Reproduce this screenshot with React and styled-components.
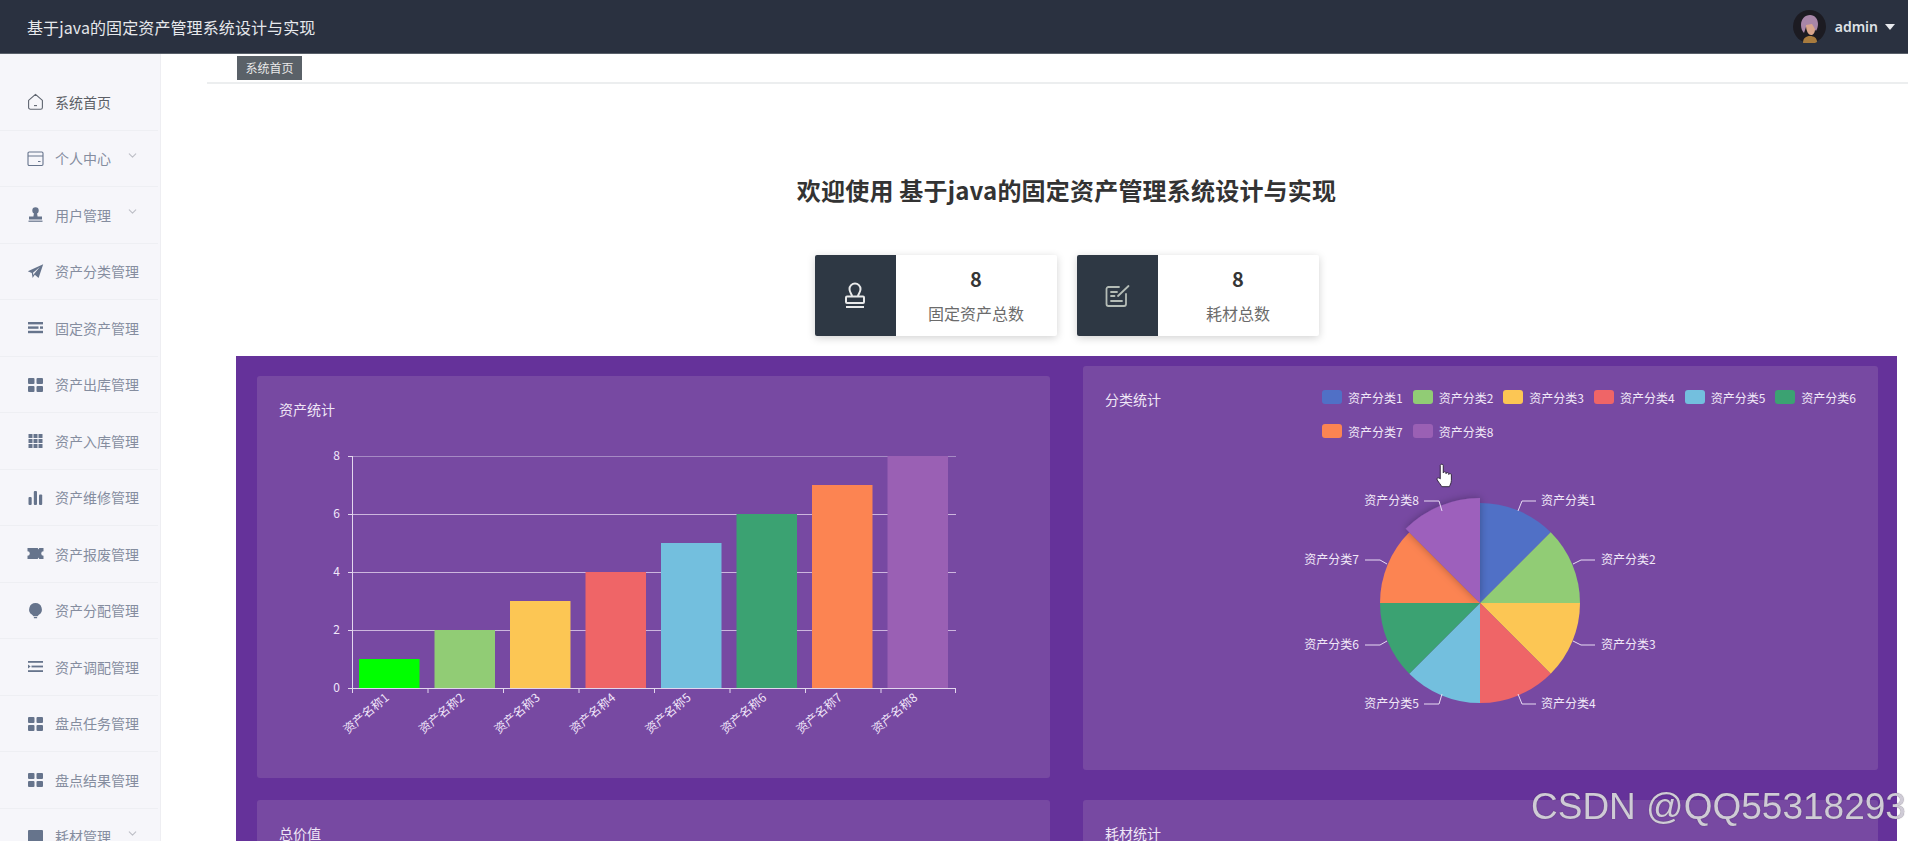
import React from 'react'
import styled, { createGlobalStyle } from 'styled-components'
import { ChevronDown } from 'lucide-react'

const GlobalStyle = createGlobalStyle`
  html, body {
    margin: 0;
    height: 100%;
    overflow: hidden;
    background: #fff;
    font-family: "Noto Sans CJK SC", "Noto Sans", sans-serif;
  }
`

const COLORS = ['#5070c6', '#91cc75', '#fcc654', '#ef6567', '#73bfde', '#3ba272', '#fc8452', '#9a60b4']
const CATEGORIES = COLORS.map((color, i) => ({ name: `资产分类${i + 1}`, color }))
const BARS = [
  { name: '资产名称1', value: 1, color: '#00ff00' },
  { name: '资产名称2', value: 2, color: COLORS[1] },
  { name: '资产名称3', value: 3, color: COLORS[2] },
  { name: '资产名称4', value: 4, color: COLORS[3] },
  { name: '资产名称5', value: 5, color: COLORS[4] },
  { name: '资产名称6', value: 6, color: COLORS[5] },
  { name: '资产名称7', value: 7, color: COLORS[6] },
  { name: '资产名称8', value: 8, color: COLORS[7] },
]

const Page = styled.div`
  height: 100vh;
  display: flex;
  flex-direction: column;
  overflow: hidden;
`

const Header = styled.header`
  flex: 0 0 54px;
  display: flex;
  align-items: center;
  justify-content: space-between;
  padding: 0 13px 0 27px;
  background: #2a3140;
  border-bottom: 1px solid #59606a;
  box-sizing: border-box;
`

const AppTitle = styled.div`
  color: #e6e8ec;
  font-size: 16px;
  letter-spacing: 0.1px;
`

const User = styled.div`
  display: flex;
  align-items: center;
  color: #dfe2e6;
  font-size: 14px;
  font-family: "Noto Sans", sans-serif;
  font-weight: 600;
`

const UserName = styled.span`
  margin: 0 7px 0 9px;
`

const Caret = styled.span`
  width: 0;
  height: 0;
  border-left: 5px solid transparent;
  border-right: 5px solid transparent;
  border-top: 6px solid #e8eaee;
`

const Body = styled.div`
  flex: 1;
  display: flex;
  min-height: 0;
`

const Sidebar = styled.aside`
  flex: 0 0 161px;
  box-sizing: border-box;
  padding-top: 20px;
  background: #f6f6fa;
  border-right: 1px solid #eeeef2;
  overflow: hidden;
`

const MenuRow = styled.div`
  height: 56.5px;
  box-sizing: border-box;
  margin-right: 2px;
  padding-left: 27px;
  display: flex;
  align-items: center;
  border-bottom: 1px solid #eeeff3;
  font-size: 14px;
  color: ${p => (p.$active ? '#5c5f66' : '#858d9f')};

  svg.menu-icon {
    flex: 0 0 17px;
    margin-right: 11px;
    color: ${p => (p.$active ? '#5f6570' : '#66748c')};
  }
`

const Chevron = styled(ChevronDown)`
  margin: 0 0 6px 15px;
  color: #bdbfc7;
`

const Main = styled.main`
  flex: 1;
  min-width: 0;
  overflow: hidden;
`

const BreadBar = styled.div`
  height: 28px;
  margin-left: 46px;
  padding-left: 30px;
  border-bottom: 2px solid #eceeef;
`

const BreadTag = styled.span`
  display: inline-block;
  width: 65px;
  height: 24px;
  line-height: 24px;
  text-align: center;
  background: #5a6168;
  color: #e9e9e9;
  font-size: 12px;
`

const Content = styled.div`
  padding: 0 11px 0 75px;
`

const Welcome = styled.h1`
  margin: 89px 0 48px;
  text-align: center;
  font-size: 24px;
  line-height: 34px;
  font-weight: 700;
  letter-spacing: 0.2px;
  color: #333;
`

const StatRow = styled.div`
  display: flex;
  justify-content: center;
  gap: 20px;
  margin-bottom: 20px;
`

const StatCard = styled.div`
  width: 242px;
  height: 81px;
  display: flex;
  background: #fff;
  border-radius: 2px;
  box-shadow: 0 2px 8px rgba(0, 0, 0, 0.18);
  overflow: hidden;
`

const StatIcon = styled.div`
  flex: 0 0 81px;
  display: flex;
  align-items: center;
  justify-content: center;
  background: #2e3844;
  color: ${p => p.$color};
`

const StatText = styled.div`
  flex: 1;
  text-align: center;
`

const StatValue = styled.div`
  margin-top: 9px;
  font-size: 20px;
  line-height: 30px;
  font-weight: 700;
  color: #353535;
`

const StatLabel = styled.div`
  margin-top: 7px;
  font-size: 16px;
  line-height: 24px;
  color: #6b6b6b;
`

const Panel = styled.section`
  display: grid;
  grid-template-columns: 793px 795px;
  column-gap: 33px;
  row-gap: 22px;
  align-items: start;
  padding: 10px 0 0 21px;
  height: 600px;
  background: #65329a;
`

const Card = styled.div`
  box-sizing: border-box;
  height: ${p => (p.$drop ? '402px' : '404px')};
  margin-top: ${p => (p.$drop ? '10px' : '0')};
  padding: 23px 10px 0 22px;
  background: #7749a2;
  border-radius: 3px;
`

const LowerCard = styled(Card)`
  margin-top: ${p => (p.$lift ? '-1px' : '0')};
`

const CardHead = styled.div`
  display: flex;
  align-items: flex-start;
  justify-content: space-between;
`

const CardTitle = styled.div`
  font-size: 14px;
  line-height: 20px;
  color: #efe6f6;
`

const Legend = styled.div`
  width: 546px;
  margin-top: 1px;
  display: flex;
  flex-wrap: wrap;
  column-gap: 10px;
  row-gap: 20px;
`

const LegendItem = styled.div`
  display: flex;
  align-items: center;
  gap: 6px;
  height: 14px;
  font-size: 12px;
  color: #f1e8f8;
`

const Swatch = styled.i`
  width: 20px;
  height: 14px;
  border-radius: 3px;
  background: ${p => p.$color};
`

const ChartSvg = styled.svg`
  display: block;
  font-family: "Noto Sans CJK SC", sans-serif;
  font-size: 12px;
`

const Watermark = styled.div`
  position: fixed;
  left: 1531px;
  top: 783px;
  font-family: "Liberation Sans", sans-serif;
  font-size: 37px;
  line-height: 48px;
  white-space: nowrap;
  color: #cfcbd6;
  text-shadow: 0 0 1px rgba(50, 40, 60, 0.7);
`

const icon = children => (
  <svg className="menu-icon" width="17" height="17" viewBox="0 0 17 17" fill="currentColor">
    {children}
  </svg>
)

const Grid4 = () =>
  icon(
    <>
      <rect x="1" y="2" width="6.5" height="6" rx="1" />
      <rect x="9.5" y="2" width="6.5" height="6" rx="1" />
      <rect x="1" y="10" width="6.5" height="6" rx="1" />
      <rect x="9.5" y="10" width="6.5" height="6" rx="1" />
    </>
  )

const MENU = [
  {
    name: '系统首页',
    active: true,
    icon: icon(
      <g fill="none" stroke="currentColor" strokeWidth="1.1">
        <path d="M1.6 7.4 8.5 1.3l6.9 6.1v7a1.8 1.8 0 0 1-1.8 1.8H3.4a1.8 1.8 0 0 1-1.8-1.8z" strokeLinejoin="round" />
        <path d="M7 12.6h3" />
      </g>
    ),
  },
  {
    name: '个人中心',
    more: true,
    icon: icon(
      <g fill="none" stroke="currentColor" strokeWidth="1.1">
        <rect x="1" y="2" width="15" height="13.5" rx="1.2" />
        <path d="M1 6h15M11 11.5h2.5" />
      </g>
    ),
  },
  {
    name: '用户管理',
    more: true,
    icon: icon(
      <>
        <circle cx="8.5" cy="4.4" r="3.2" />
        <path d="M7 7h3l.6 3.4H15v3H2v-3h4.4z" />
        <rect x="1.5" y="14.6" width="14" height="1.2" />
      </>
    ),
  },
  {
    name: '资产分类管理',
    icon: icon(<path d="M16.2 1.2 11.6 15 7.8 11.7 5.6 15 4.8 10 .8 8.2zM6 9.7l.4 2.4 1-1.6 5.4-6.6z" fillRule="evenodd" />),
  },
  {
    name: '固定资产管理',
    icon: icon(
      <>
        <rect x="1" y="3" width="15" height="2.4" />
        <rect x="1" y="7.4" width="10.5" height="2.4" />
        <rect x="13" y="7.4" width="3" height="2.4" />
        <rect x="1" y="11.8" width="15" height="2.4" />
      </>
    ),
  },
  { name: '资产出库管理', icon: <Grid4 /> },
  {
    name: '资产入库管理',
    icon: icon(
      <>
        {[1.5, 6.5, 11.5].flatMap(x =>
          [2, 7, 12].map(y => <rect key={`${x}-${y}`} x={x} y={y} width="4" height="4" />)
        )}
      </>
    ),
  },
  {
    name: '资产维修管理',
    icon: icon(
      <>
        <rect x="1.5" y="8" width="3.2" height="8" rx="1" />
        <rect x="6.8" y="2" width="3.2" height="14" rx="1" />
        <rect x="12" y="5.5" width="3.2" height="10.5" rx="1" />
      </>
    ),
  },
  {
    name: '资产报废管理',
    icon: icon(<path d="M.5 3h10.2l.8 1.6.8-1.6h4.2v3.2a2.3 2.3 0 0 0 0 4.6V14h-4.2l-.8-1.6-.8 1.6H.5v-3.2a2.3 2.3 0 0 0 0-4.6z" />),
  },
  {
    name: '资产分配管理',
    icon: icon(
      <>
        <path d="M8.5 1a6.4 6.4 0 0 1 3.4 11.8l-1.4 1.5h-4l-1.4-1.5A6.4 6.4 0 0 1 8.5 1z" />
        <rect x="6.8" y="15" width="3.4" height="1.2" rx=".5" />
      </>
    ),
  },
  {
    name: '资产调配管理',
    icon: icon(
      <>
        <rect x="1" y="3" width="15" height="1.8" />
        <rect x="4.5" y="7.6" width="11.5" height="1.8" />
        <path d="M1 6.6 3.6 8.5 1 10.4z" />
        <rect x="1" y="12.2" width="15" height="1.8" />
      </>
    ),
  },
  { name: '盘点任务管理', icon: <Grid4 /> },
  { name: '盘点结果管理', icon: <Grid4 /> },
  {
    name: '耗材管理',
    more: true,
    icon: icon(<rect x="1" y="2" width="15" height="13" rx="1" />),
  },
]

function Avatar() {
  return (
    <svg width="33" height="33" viewBox="0 0 33 33">
      <circle cx="16.5" cy="16.5" r="16.5" fill="#1c1b22" />
      <path d="M8 15c0-6 4-10 9-10s8 4 8 9c0 3-1 5-2 7l-4-5-6 1-2 6c-2-2-3-5-3-8z" fill="#a886a8" />
      <path d="M13 15l6-1 3 5c0 4-2 6-4 6s-5-3-5-10z" fill="#d8a58c" />
      <path d="M10 33c0-5 3-7 7-7s7 2 7 6a16 16 0 0 1-14 1z" fill="#a87b3e" />
    </svg>
  )
}

function StampIcon() {
  return (
    <svg width="22" height="27" viewBox="0 0 22 27" fill="none" stroke="currentColor" strokeWidth="2" strokeLinejoin="round">
      <path d="M8 14.5c0-2.6-2.5-3.6-2.5-7.5a5.5 5.5 0 0 1 11 0c0 3.900-2.500 4.900-2.500 7.500" />
      <rect x="2" y="14.500" width="18" height="6.500" rx="1" />
      <path d="M2 25h18" />
    </svg>
  )
}

function NoteIcon() {
  return (
    <svg width="25" height="22" viewBox="0 0 25 22" fill="none" stroke="currentColor" strokeWidth="1.800" strokeLinecap="round">
      <path d="M14 2H3.500A2 2 0 0 0 1.500 4v15a2 2 0 0 0 2 2H19a2 2 0 0 0 2-2V9" />
      <path d="M23.500 1 13 11" />
      <path d="M6 7h6M6 11h3.500M6 16h11" />
    </svg>
  )
}

function BarChart() {
  const left = 73
  const top = 37
  const width = 604
  const height = 232
  const band = width / BARS.length
  const bottom = top + height
  return (
    <ChartSvg width="761" height="340" viewBox="0 0 761 340">
      {[2, 4, 6, 8].map(v => (
        <line key={v} x1={left} x2={left + width} y1={bottom - v * 29 + 0.5} y2={bottom - v * 29 + 0.5} stroke={v === 8 ? '#a68ac4' : '#cdb6de'} />
      ))}
      {[0, 2, 4, 6, 8].map(v => (
        <React.Fragment key={v}>
          <text x={left - 12} y={bottom - v * 29 + 4} textAnchor="end" fill="#f1e6fa">{v}</text>
          <line x1={left - 4} x2={left} y1={bottom - v * 29 + 0.5} y2={bottom - v * 29 + 0.5} stroke="#e3d6ee" />
        </React.Fragment>
      ))}
      {BARS.map((b, i) => (
        <rect key={b.name} x={left + band * i + 7} y={bottom - b.value * 29} width="60.5" height={b.value * 29} fill={b.color} />
      ))}
      <line x1={left + 0.5} x2={left + 0.5} y1={top} y2={bottom} stroke="#e3d6ee" />
      <line x1={left} x2={left + width} y1={bottom + 0.5} y2={bottom + 0.5} stroke="#e3d6ee" />
      {BARS.map((b, i) => (
        <line key={b.name} x1={left + band * i + 0.5} x2={left + band * i + 0.5} y1={bottom} y2={bottom + 5} stroke="#e3d6ee" />
      ))}
      <line x1={left + width - 0.5} x2={left + width - 0.5} y1={bottom} y2={bottom + 5} stroke="#e3d6ee" />
      {BARS.map((b, i) => {
        const x = left + band * i + band / 2
        const y = bottom + 11
        return (
          <text key={b.name} x={x} y={y} textAnchor="end" fill="#f1e6fa" transform={`rotate(-40 ${x} ${y})`}>
            {b.name}
          </text>
        )
      })}
    </ChartSvg>
  )
}

const PIE_LABELS = [
  { x: 438, y: 63, line: '415,73 419,63 433,63', anchor: 'start' },
  { x: 498, y: 122, line: '470,126 478,122 492,122', anchor: 'start' },
  { x: 498, y: 207, line: '470,203 478,207 492,207', anchor: 'start' },
  { x: 438, y: 266, line: '415,256 419,266 433,266', anchor: 'start' },
  { x: 316, y: 266, line: '339,256 336,266 321,266', anchor: 'end' },
  { x: 256, y: 207, line: '284,203 277,207 262,207', anchor: 'end' },
  { x: 256, y: 122, line: '284,126 277,122 262,122', anchor: 'end' },
  { x: 316, y: 63, line: '339,73 336,63 321,63', anchor: 'end' },
]

function slice(cx, cy, r, i) {
  const a0 = (i * Math.PI) / 4
  const a1 = ((i + 1) * Math.PI) / 4
  const p = a => `${(cx + r * Math.sin(a)).toFixed(2)} ${(cy - r * Math.cos(a)).toFixed(2)}`
  return `M${cx} ${cy}L${p(a0)}A${r} ${r} 0 0 1 ${p(a1)}Z`
}

function PieChart() {
  const cx = 377
  const cy = 165
  return (
    <ChartSvg width="763" height="330" viewBox="0 0 763 330">
      <defs>
        <filter id="hover" x="-30%" y="-30%" width="160%" height="160%">
          <feDropShadow dx="0" dy="0" stdDeviation="4" floodColor="#000" floodOpacity="0.3" />
        </filter>
      </defs>
      <g transform="translate(-2 0)">
        {CATEGORIES.slice(0, 7).map((c, i) => (
          <path key={c.name} d={slice(cx, cy, 100, i)} fill={c.color} />
        ))}
        <path d={slice(cx, cy, 105, 7)} fill="#9d60bc" filter="url(#hover)" />
        {CATEGORIES.map((c, i) => {
          const l = PIE_LABELS[i]
          return (
            <React.Fragment key={c.name}>
              <polyline points={l.line} fill="none" stroke="#e9dcf3" />
              <text x={l.x} y={l.y + 4} textAnchor={l.anchor} fill="#f1e8f8">{c.name}</text>
            </React.Fragment>
          )
        })}
      </g>
      <g transform="translate(331 26) scale(1.25 1.05)">
        <path
          d="M3.400 1.400c0-1.600 2.400-1.600 2.400 0v7c0-1.300 2.200-1.300 2.200 0v.8c0-1.300 2.200-1.300 2.200 0v.8c0-1.200 2.100-1.200 2.100.2v5.400c0 2.600-1.200 4.600-1.600 6H4.600c-.7-1.800-2.200-3.600-3.600-6.400-.9-1.800.9-2.900 2.400-1z"
          fill="#fff"
          stroke="#2a2035"
          strokeWidth="0.8"
          strokeLinejoin="round"
        />
      </g>
    </ChartSvg>
  )
}

export default function App() {
  return (
    <>
      <GlobalStyle />
      <Page>
        <Header>
          <AppTitle>基于java的固定资产管理系统设计与实现</AppTitle>
          <User>
            <Avatar />
            <UserName>admin</UserName>
            <Caret />
          </User>
        </Header>
        <Body>
          <Sidebar>
            {MENU.map(item => (
              <MenuRow key={item.name} $active={item.active}>
                {item.icon}
                {item.name}
                {item.more && <Chevron size={13} />}
              </MenuRow>
            ))}
          </Sidebar>
          <Main>
            <BreadBar>
              <BreadTag>系统首页</BreadTag>
            </BreadBar>
            <Content>
              <Welcome>欢迎使用 基于java的固定资产管理系统设计与实现</Welcome>
              <StatRow>
                <StatCard>
                  <StatIcon $color="#e8e9ea">
                    <StampIcon />
                  </StatIcon>
                  <StatText>
                    <StatValue>8</StatValue>
                    <StatLabel>固定资产总数</StatLabel>
                  </StatText>
                </StatCard>
                <StatCard>
                  <StatIcon $color="#b4bcb6">
                    <NoteIcon />
                  </StatIcon>
                  <StatText>
                    <StatValue>8</StatValue>
                    <StatLabel>耗材总数</StatLabel>
                  </StatText>
                </StatCard>
              </StatRow>
              <Panel>
                <Card $drop>
                  <CardTitle>资产统计</CardTitle>
                  <BarChart />
                </Card>
                <Card>
                  <CardHead>
                    <CardTitle>分类统计</CardTitle>
                    <Legend>
                      {CATEGORIES.map(c => (
                        <LegendItem key={c.name}>
                          <Swatch $color={c.color} />
                          {c.name}
                        </LegendItem>
                      ))}
                    </Legend>
                  </CardHead>
                  <PieChart />
                </Card>
                <LowerCard>
                  <CardTitle>总价值</CardTitle>
                </LowerCard>
                <LowerCard>
                  <CardTitle>耗材统计</CardTitle>
                </LowerCard>
              </Panel>
            </Content>
          </Main>
        </Body>
      </Page>
      <Watermark>CSDN @QQ55318293</Watermark>
    </>
  )
}
